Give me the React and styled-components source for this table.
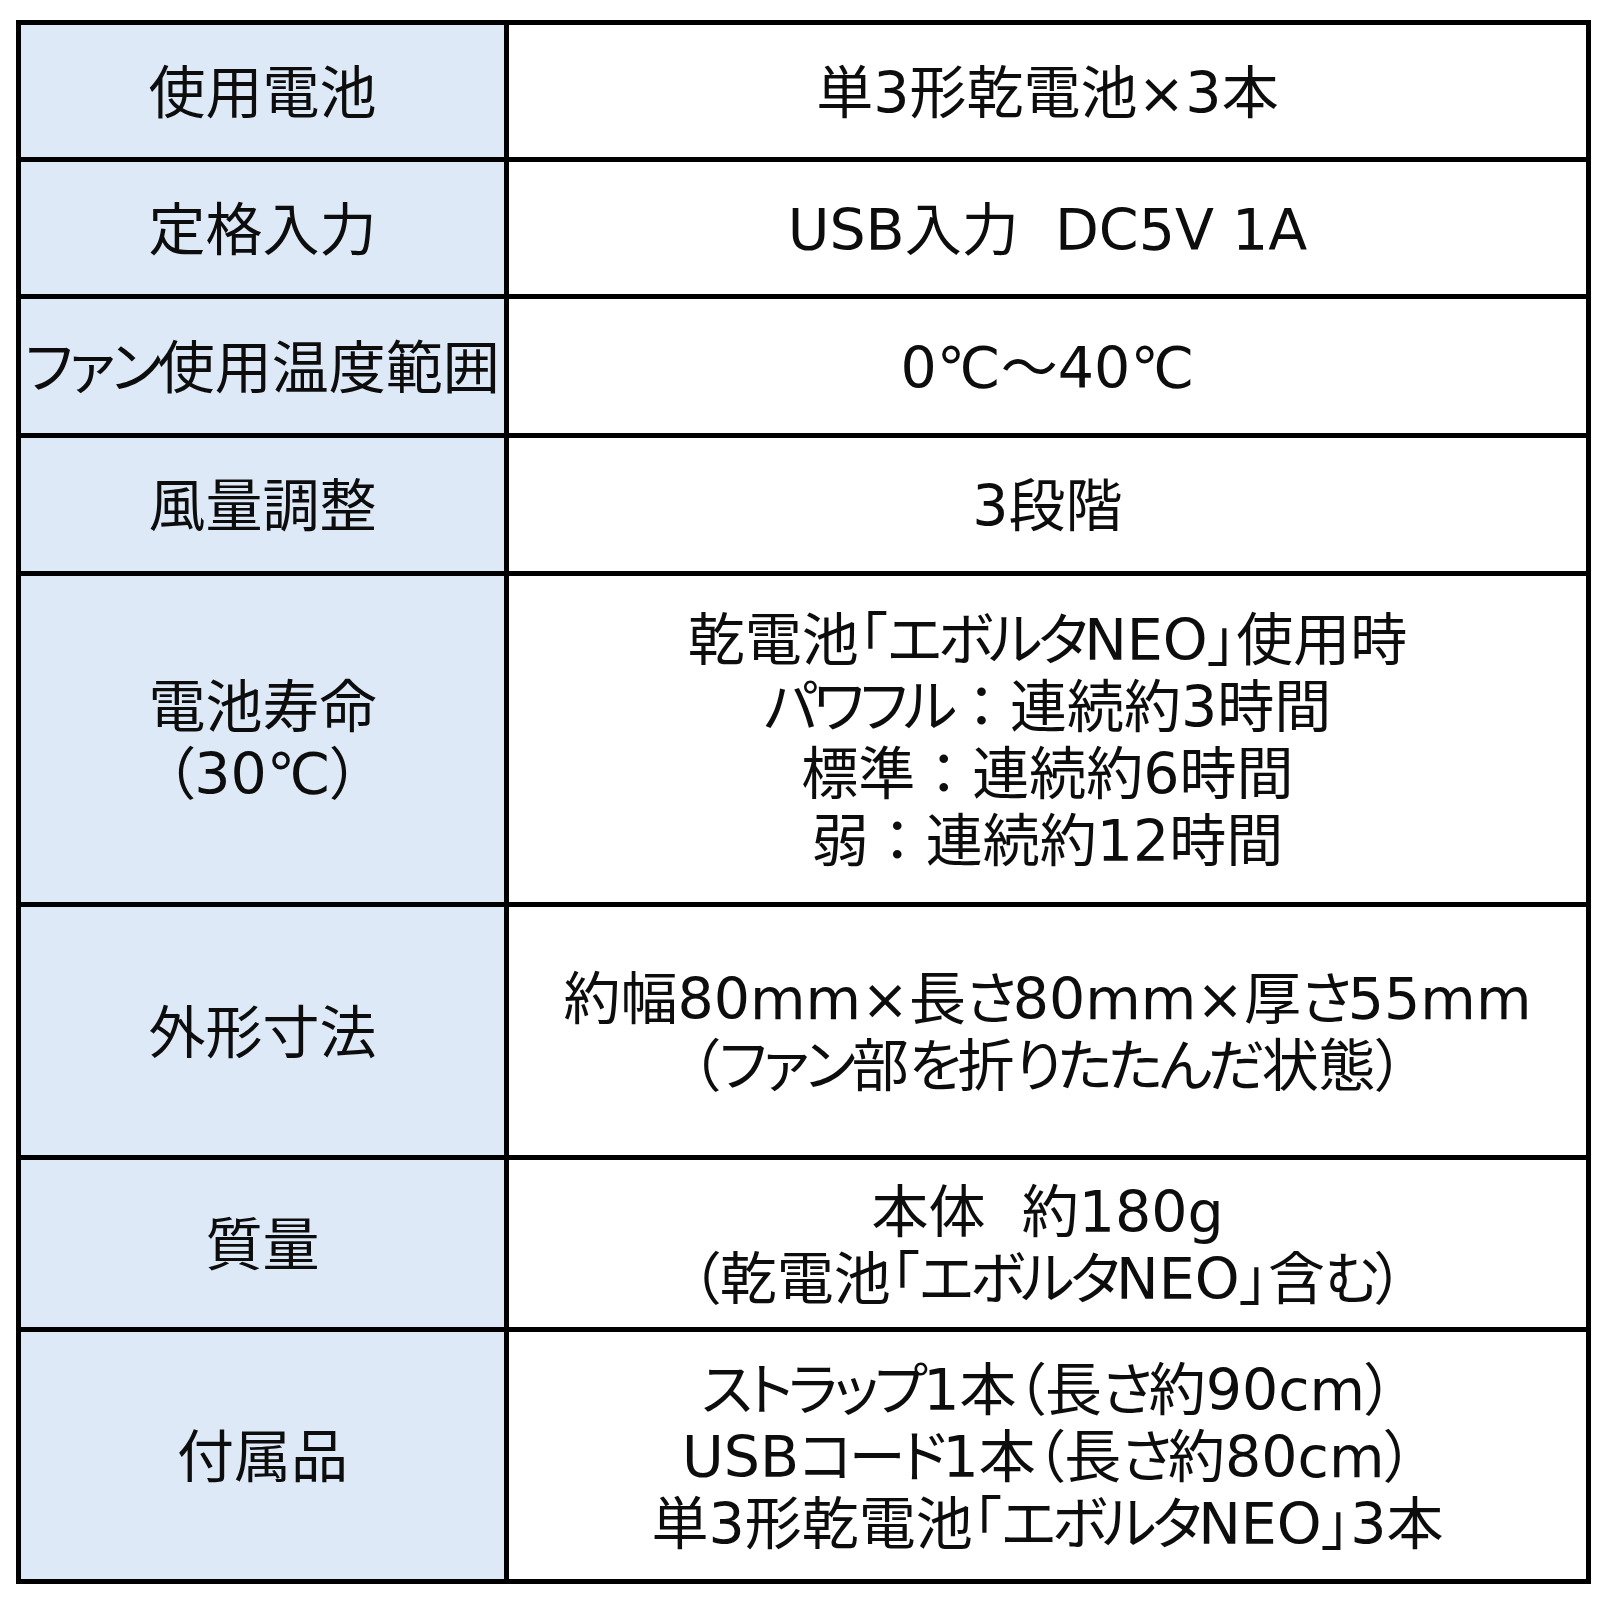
import React from 'react';
import styled, { createGlobalStyle } from 'styled-components';

const GlobalStyle = createGlobalStyle`
  body {
    margin: 0;
    background: #fff;
    font-family: "DejaVu Sans", "Noto Sans CJK JP", sans-serif;
    color: #0d0d0d;
  }
`;

const specs = [
  { h: 132, label: ['使用電池'], value: ['単3形乾電池×3本'] },
  { h: 132, label: ['定格入力'], value: ['USB入力  DC5V 1A'] },
  { h: 134, label: ['ファン使用温度範囲'], value: ['0℃～40℃'] },
  { h: 133, label: ['風量調整'], value: ['3段階'] },
  {
    h: 326,
    label: ['電池寿命', '（30℃）'],
    value: [
      '乾電池「エボルタNEO」使用時',
      'パワフル：連続約3時間',
      '標準：連続約6時間',
      '弱：連続約12時間',
    ],
  },
  {
    h: 248,
    label: ['外形寸法'],
    value: ['約幅80mm×長さ80mm×厚さ55mm', '（ファン部を折りたたんだ状態）'],
  },
  { h: 167, label: ['質量'], value: ['本体  約180g', '（乾電池「エボルタNEO」含む）'] },
  {
    h: 247,
    label: ['付属品'],
    value: [
      'ストラップ1本（長さ約90cm）',
      'USBコード1本（長さ約80cm）',
      '単3形乾電池「エボルタNEO」3本',
    ],
  },
];

const Sheet = styled.div`
  display: grid;
  grid-template-columns: 483px 1077px;
  grid-template-rows: ${({ rows }) => rows};
  gap: 5px;
  padding: 5px;
  width: fit-content;
  margin: 20px 0 0 16px;
  background: #000;
`;

const Cell = styled.div`
  display: flex;
  flex-direction: column;
  align-items: center;
  justify-content: center;
  padding-top: 4px;
  background: ${({ head }) => (head ? '#dde9f6' : '#fff')};
  font-size: 57px;
  line-height: 67px;
  text-align: center;
  white-space: pre;
  font-feature-settings: "palt";
`;

const Line = styled.div``;

// kana sit a little tighter than kanji in the original sheet
const Kana = styled.span`
  letter-spacing: -4px;
`;

// full-width colon keeps its wide box
const Colon = styled.span`
  font-feature-settings: normal;
`;

function renderLine(text) {
  return text.split(/([\u3041-\u30ff]+|：)/).map((p, i) => {
    if (!p) return null;
    if (p === '：') return <Colon key={i}>：</Colon>;
    if (/^[\u3041-\u30ff]+$/.test(p)) return <Kana key={i}>{p}</Kana>;
    return <React.Fragment key={i}>{p}</React.Fragment>;
  });
}

export default function App() {
  const rows = specs.map((s) => `${s.h}px`).join(' ');
  return (
    <>
      <GlobalStyle />
      <Sheet rows={rows}>
        {specs.map((s) => (
          <React.Fragment key={s.label[0]}>
            <Cell head>
              {s.label.map((t) => <Line key={t}>{renderLine(t)}</Line>)}
            </Cell>
            <Cell>
              {s.value.map((t) => <Line key={t}>{renderLine(t)}</Line>)}
            </Cell>
          </React.Fragment>
        ))}
      </Sheet>
    </>
  );
}
